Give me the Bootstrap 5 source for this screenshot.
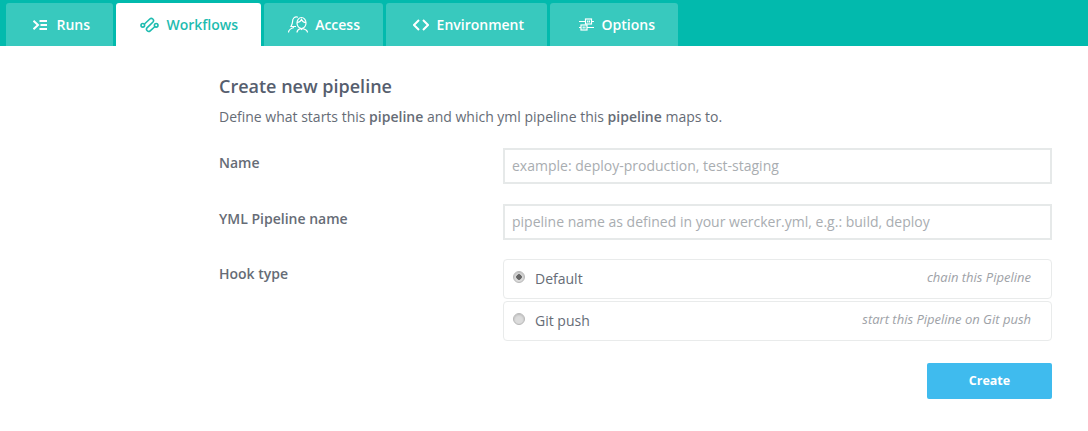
<!DOCTYPE html>
<html lang="en"><head><meta charset="utf-8">
<title>Workflows</title>
<link href="https://cdn.jsdelivr.net/npm/bootstrap@5.3.0/dist/css/bootstrap.min.css" rel="stylesheet">
<style>
html,body{height:100%;overflow:hidden}
body{font-family:"Open Sans","Liberation Sans",sans-serif;color:#5f6670;background:#fff}
.tabbar{background:#02baad;height:46px;padding:3px 0 0 6px;gap:3px}
.tabitem{height:43px;background:#38c9be;color:#fff;font-weight:600;font-size:14px;border-radius:3px 3px 0 0;text-decoration:none;justify-content:flex-end;padding-right:23px}
.tabitem svg{display:block;flex:none}
.tabitem.sel{background:#fff;color:#1ebcb0}
.t1{width:107px;gap:9px}.t2{width:145px;gap:7px}.t3{width:119px;gap:7px}.t4{width:161px;gap:8px}.t5{width:128px;gap:8px}
.formwrap{width:833px;margin-left:219px;padding-top:29px}
.ttl{font-size:18px;font-weight:600;color:#565e6e;line-height:23px;margin:0}
.subt{font-size:14px;line-height:20px;margin:9px 0 0;color:#666c76}
.subt b{font-weight:600}
.rowline{display:flex}
.r1{margin-top:21px}.r2{margin-top:20px}.r3{margin-top:19px}.r4{margin-top:20px}
.lbl{width:284px;flex:none;font-size:14px;font-weight:600;color:#666c76;line-height:20px;margin:0;padding-top:5px}
.field{flex:1;min-width:0}
.pipeinput{height:36px;border:2px solid #e6e9e9;border-radius:0;font-size:14px;padding:0 7px 2px;color:#5f6670;box-shadow:none}
.pipeinput::placeholder{color:#a9adb1;opacity:1}
.hook{height:40px;border:1px solid #e9ebeb;border-radius:4px;padding:0 20px 2px 9px;margin-bottom:2px;font-size:14px;color:#666c76}
.hook .form-check-input{width:12px;height:12px;margin:0 10px 2px 0;background:#dcdcdc;border:1px solid #b8b8b8;box-shadow:inset 0 1px 2px rgba(0,0,0,.15);flex:none;float:none}
.hook .form-check-input:checked{background:radial-gradient(circle,#666 0 2.5px,#dcdcdc 3px);border-color:#b8b8b8}
.hintx{font-style:italic;font-size:13px;color:#9ea2a7;margin-left:auto}
.gobtn{width:125px;height:36px;background:#3fbbee;border:0;color:#fff;font-size:12.500px;font-weight:700;border-radius:2px;padding:0}
.gobtn:hover{background:#3fbbee;color:#fff}
</style></head>
<body>
<nav class="tabbar d-flex">
<a href="#" class="tabitem t1 d-flex align-items-center">
<svg width="14" height="10" viewBox="0 0 14 10" fill="none" stroke="currentColor" stroke-width="2"><path d="M.5 .8 5 5 .5 9.200"/><path d="M6.500 1H14M7.500 5H14M6.500 9H14"/></svg>Runs</a>
<a href="#" class="tabitem sel t2 d-flex align-items-center">
<svg width="19" height="16" viewBox="0 0 19 16" fill="none" stroke="currentColor" stroke-width="1.600"><circle cx="2.800" cy="8.300" r="1.800"/><circle cx="16.200" cy="8.300" r="1.800"/><path d="M4.500 7 9.800 2a2.200 2.200 0 0 1 3.200 3L7 10.800a2.200 2.200 0 0 0 3.200 3L15 9.500"/></svg>Workflows</a>
<a href="#" class="tabitem t3 d-flex align-items-center">
<svg width="20" height="17" viewBox="0 0 20 17" fill="none" stroke="currentColor" stroke-width="1.200"><ellipse cx="13.500" cy="7" rx="4.500" ry="5.500"/><path d="M9 6.500c2 0 3.500-1 4.500-3 .8 2 2 3 4.500 3"/><path d="M10 1.200C7 0 4.500 2 4.500 6c0 1.500-.7 3-1.500 4.500h5"/><path d="M.5 16.500c0-2.500 2-4 5.500-5M9 16.500c0-2 1.500-3.300 3.500-4l1 1 1-1c2.500.7 5 1.800 5 4"/></svg>Access</a>
<a href="#" class="tabitem t4 d-flex align-items-center">
<svg width="16" height="12" viewBox="0 0 16 12" fill="none" stroke="currentColor" stroke-width="2"><path d="M6 1 1 6l5 5M10 1l5 5-5 5"/></svg>Environment</a>
<a href="#" class="tabitem t5 d-flex align-items-center">
<svg width="15" height="13" viewBox="0 0 15 13" fill="none" stroke="currentColor" stroke-width="1.200"><path d="M0 3.500h6.500M12.500 3.500H15M0 9.500h2M8 9.500h7"/><rect x="6.500" y="1" width="6" height="5"/><rect x="2" y="7" width="6" height="5"/><path d="M8.700 2.500v2M10.400 2.500v2M4.200 8.500v2M5.900 8.500v2"/></svg>Options</a>
</nav>
<main class="formwrap">
<h1 class="ttl">Create new pipeline</h1>
<p class="subt">Define what starts this <b>pipeline</b> and which yml pipeline this <b>pipeline</b> maps to.</p>
<form>
<div class="rowline r1">
<label class="lbl" for="pn">Name</label>
<div class="field"><input id="pn" class="form-control pipeinput" placeholder="example: deploy-production, test-staging"></div>
</div>
<div class="rowline r2">
<label class="lbl" for="py">YML Pipeline name</label>
<div class="field"><input id="py" class="form-control pipeinput" placeholder="pipeline name as defined in your wercker.yml, e.g.: build, deploy"></div>
</div>
<div class="rowline r3">
<div class="lbl">Hook type</div>
<div class="field">
<label class="hook d-flex align-items-center"><input class="form-check-input" type="radio" name="hk" checked>Default<span class="hintx">chain this Pipeline</span></label>
<label class="hook d-flex align-items-center"><input class="form-check-input" type="radio" name="hk">Git push<span class="hintx">start this Pipeline on Git push</span></label>
</div>
</div>
<div class="d-flex justify-content-end r4"><button type="button" class="btn gobtn">Create</button></div>
</form>
</main>
<script src="https://cdn.jsdelivr.net/npm/bootstrap@5.3.0/dist/js/bootstrap.bundle.min.js"></script>
</body></html>
